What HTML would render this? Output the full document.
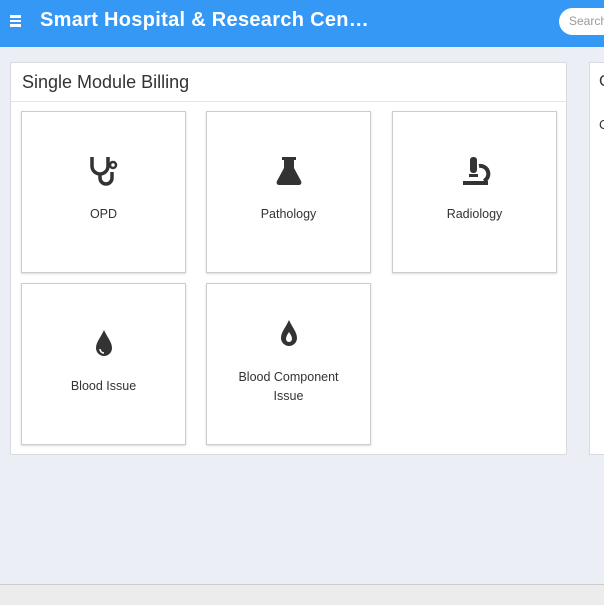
<!DOCTYPE html>
<html><head><style>
body{margin:0;width:604px;height:604px;overflow:hidden;background:#eceef5;font-family:"Liberation Sans",sans-serif;position:relative}
.hdr{position:absolute;left:0;top:0;width:604px;height:47px;background:#3598f5}
.ham{position:absolute;left:10px;top:15px;width:11px}
.ham i{display:block;height:2.5px;background:#fff;margin-bottom:2px}
.title{position:absolute;left:40px;top:9px;color:#fff;font-weight:bold;font-size:20px;letter-spacing:0.3px}
.search{position:absolute;left:559px;top:8px;width:80px;height:27px;background:#fff;border-radius:14px;color:#999;font-size:12px;line-height:27px;padding-left:10px;box-sizing:border-box}
.panel{position:absolute;left:10px;top:62px;width:557px;height:393px;background:#fff;border:1px solid #d8dadf;border-radius:2px;box-sizing:border-box}
.ph{height:38px;border-bottom:1px solid #e4e4e4;font-size:18px;color:#333;line-height:38px;padding-left:11px}
.tile{position:absolute;width:165px;height:162px;border:1px solid #ccc;box-shadow:0 1px 2px rgba(0,0,0,.15);box-sizing:border-box;background:#fff;text-align:center;font-size:12.5px;color:#333}
.tile svg{position:absolute;left:50%;transform:translateX(-50%)}
.tile span{position:absolute;left:0;right:0}
.p2{position:absolute;left:589px;top:62px;width:30px;height:393px;background:#fff;border:1px solid #d8dadf;box-sizing:border-box;font-size:16px;color:#333}
.foot{position:absolute;left:0;top:584px;width:604px;height:20px;background:#ececec;border-top:1px solid #ccc}
</style></head><body>
<div class="hdr"><div class="ham"><i></i><i></i><i></i></div><div class="title">Smart Hospital &amp; Research Cen…</div><div class="search">Search</div></div>
<div class="panel"><div class="ph">Single Module Billing</div>
<div class="tile" style="left:10px;top:48px"><svg style="top:42px" width="34" height="34" viewBox="0 0 34 34"><path d="M5 3v9a8 8 0 0 0 16 0V3" fill="none" stroke="#333" stroke-width="3.5"/><path d="M13 20v4a6 6 0 0 0 12 0v-6" fill="none" stroke="#333" stroke-width="3.5"/><circle cx="26" cy="11" r="3" fill="none" stroke="#333" stroke-width="2.5"/></svg><span style="top:95px">OPD</span></div>
<div class="tile" style="left:195px;top:48px"><svg style="top:42px" width="34" height="34" viewBox="0 0 34 34"><path d="M10 3h14v3h-2v8l7 13c1 2 0 4-2 4H7c-2 0-3-2-2-4l7-13V6h-2z" fill="#333"/></svg><span style="top:95px">Pathology</span></div>
<div class="tile" style="left:381px;top:48px"><svg style="top:42px" width="34" height="34" viewBox="0 0 34 34"><rect x="12" y="3" width="7" height="16" rx="3" fill="#333"/><rect x="11" y="20" width="9" height="3" fill="#333"/><path d="M21 12a8 8 0 0 1 5 15" fill="none" stroke="#333" stroke-width="4"/><rect x="5" y="27" width="25" height="4" fill="#333"/></svg><span style="top:95px">Radiology</span></div>
<div class="tile" style="left:10px;top:220px"><svg style="top:42px" width="34" height="34" viewBox="0 0 34 34"><path d="M17 4C14 11 9 16 9 22a8 8 0 0 0 16 0c0-6-5-11-8-18z" fill="#333"/><path d="M13 23a4 4 0 0 0 4 4" fill="none" stroke="#fff" stroke-width="1.5"/></svg><span style="top:95px">Blood Issue</span></div>
<div class="tile" style="left:195px;top:220px"><svg style="top:33px" width="34" height="34" viewBox="0 0 34 34"><path d="M17 3C14 10 9 15 9 21a8 8 0 0 0 16 0c0-6-5-11-8-18z" fill="#333"/><path d="M17 15c-2 3-3 5-3 7a3 3 0 0 0 6 0c0-2-1-4-3-7z" fill="#fff"/></svg><span style="top:84px;line-height:19px">Blood Component<br>Issue</span></div>
</div>
<div class="p2"><div style="position:absolute;left:9px;top:10px">C</div><div style="position:absolute;left:9px;top:54px;font-size:13px">C</div></div>
<div class="foot"></div>
</body></html>
